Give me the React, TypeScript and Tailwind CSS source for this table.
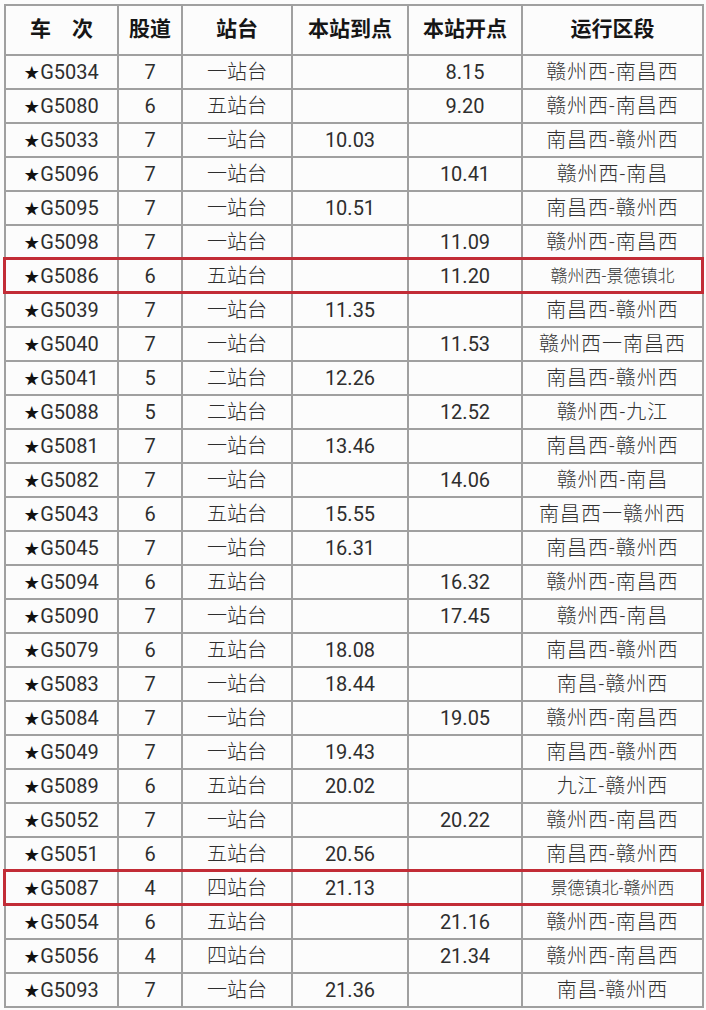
const rows: [string, string, string, string, string, string, boolean?][] = [
  ["G5034", "7", "一站台", "", "8.15", "赣州西-南昌西"],
  ["G5080", "6", "五站台", "", "9.20", "赣州西-南昌西"],
  ["G5033", "7", "一站台", "10.03", "", "南昌西-赣州西"],
  ["G5096", "7", "一站台", "", "10.41", "赣州西-南昌"],
  ["G5095", "7", "一站台", "10.51", "", "南昌西-赣州西"],
  ["G5098", "7", "一站台", "", "11.09", "赣州西-南昌西"],
  ["G5086", "6", "五站台", "", "11.20", "赣州西-景德镇北", true],
  ["G5039", "7", "一站台", "11.35", "", "南昌西-赣州西"],
  ["G5040", "7", "一站台", "", "11.53", "赣州西一南昌西"],
  ["G5041", "5", "二站台", "12.26", "", "南昌西-赣州西"],
  ["G5088", "5", "二站台", "", "12.52", "赣州西-九江"],
  ["G5081", "7", "一站台", "13.46", "", "南昌西-赣州西"],
  ["G5082", "7", "一站台", "", "14.06", "赣州西-南昌"],
  ["G5043", "6", "五站台", "15.55", "", "南昌西一赣州西"],
  ["G5045", "7", "一站台", "16.31", "", "南昌西-赣州西"],
  ["G5094", "6", "五站台", "", "16.32", "赣州西-南昌西"],
  ["G5090", "7", "一站台", "", "17.45", "赣州西-南昌"],
  ["G5079", "6", "五站台", "18.08", "", "南昌西-赣州西"],
  ["G5083", "7", "一站台", "18.44", "", "南昌-赣州西"],
  ["G5084", "7", "一站台", "", "19.05", "赣州西-南昌西"],
  ["G5049", "7", "一站台", "19.43", "", "南昌西-赣州西"],
  ["G5089", "6", "五站台", "20.02", "", "九江-赣州西"],
  ["G5052", "7", "一站台", "", "20.22", "赣州西-南昌西"],
  ["G5051", "6", "五站台", "20.56", "", "南昌西-赣州西"],
  ["G5087", "4", "四站台", "21.13", "", "景德镇北-赣州西", true],
  ["G5054", "6", "五站台", "", "21.16", "赣州西-南昌西"],
  ["G5056", "4", "四站台", "", "21.34", "赣州西-南昌西"],
  ["G5093", "7", "一站台", "21.36", "", "南昌-赣州西"],
];

const headers = ["车\u3000次", "股道", "站台", "本站到点", "本站开点", "运行区段"];
const widths = ["w-[113px]", "w-[64px]", "w-[110px]", "w-[116px]", "w-[114px]", "w-[181px]"];

export default function App() {
  return (
    <div
      className="w-[706px] h-[1010px] bg-[#fcfcfc] pt-[4px] pl-[4px] overflow-hidden"
      style={{ fontFamily: '"Roboto", "Noto Sans CJK SC", sans-serif' }}
    >
      <table className="table-fixed border-collapse w-[699px] text-[#2e2e2e]">
        <colgroup>
          {widths.map((w, i) => (
            <col key={i} className={w} />
          ))}
        </colgroup>
        <thead>
          <tr>
            {headers.map((h) => (
              <th
                key={h}
                className="h-[50px] border-2 border-[#a0a0a0] text-[21px] font-bold text-[#161616] text-center p-0"
              >
                {h}
              </th>
            ))}
          </tr>
        </thead>
        <tbody>
          {rows.map(([train, track, platform, arr, dep, route, hl]) => (
            <tr key={train}>
              <td className="relative h-[34px] border-2 border-[#a0a0a0] text-center text-[20px] p-0 leading-none">
                <span className="text-[15px] text-[#111] align-[1px] mr-[1px]">★</span>
                {train}
                {hl && (
                  <div className="absolute left-[-3px] top-[-3px] w-[701px] h-[37px] border-[3px] border-[#c22c36] pointer-events-none" />
                )}
              </td>
              <td className="border-2 border-[#a0a0a0] text-center text-[20px] p-0 leading-none">{track}</td>
              <td className="border-2 border-[#a0a0a0] text-center text-[20px] font-light p-0 leading-none">
                {platform}
              </td>
              <td className="border-2 border-[#a0a0a0] text-center text-[20px] p-0 leading-none">{arr}</td>
              <td className="border-2 border-[#a0a0a0] text-center text-[20px] p-0 leading-none">{dep}</td>
              <td
                className={`border-2 border-[#a0a0a0] text-center p-0 leading-none font-light text-[#333] ${
                  hl ? "text-[17px]" : "text-[20px] tracking-[1px]"
                }`}
              >
                {route}
              </td>
            </tr>
          ))}
        </tbody>
      </table>
    </div>
  );
}
